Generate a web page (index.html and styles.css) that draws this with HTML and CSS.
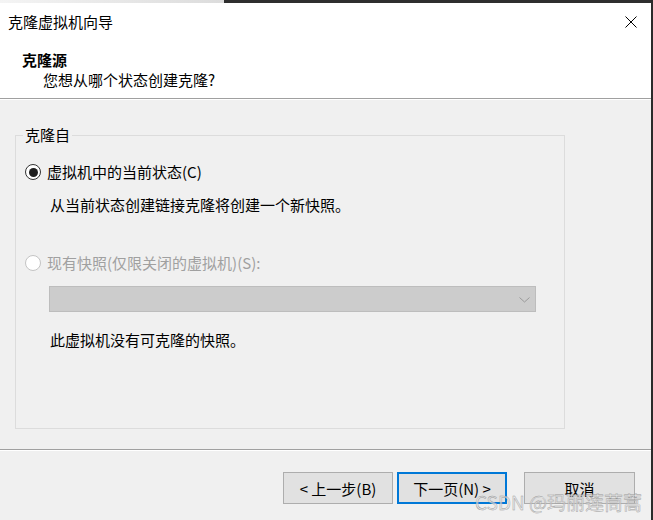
FILE: index.html
```html
<!DOCTYPE html>
<html lang="zh-CN">
<head>
    <meta charset="UTF-8">
    <meta name="viewport" content="width=device-width, initial-scale=1.0">
    <title>克隆虚拟机向导</title>
    <link rel="stylesheet" href="styles.css">
</head>
<body>

<div class="window">
    <div class="topbar">
        <div class="topbar-light"></div>
        <div class="topbar-dark"></div>
    </div>

    <div class="header">
        <div class="title-row">
            <span class="title">克隆虚拟机向导</span>
            <svg class="close" width="12" height="12" viewBox="0 0 12 12">
                <path d="M0.5 0.5 L11.5 11.5 M11.5 0.5 L0.5 11.5" stroke="#000" stroke-width="1" fill="none"/>
            </svg>
        </div>
        <div class="page-title">克隆源</div>
        <div class="page-sub">您想从哪个状态创建克隆?</div>
    </div>

    <div class="main">
        <fieldset class="group">
            <legend>克隆自</legend>

            <label class="radio-row">
                <span class="radio checked"></span>
                <span>虚拟机中的当前状态(C)</span>
            </label>
            <p class="hint first">从当前状态创建链接克隆将创建一个新快照。</p>

            <label class="radio-row disabled">
                <span class="radio"></span>
                <span>现有快照(仅限关闭的虚拟机)(S):</span>
            </label>
            <div class="combo">
                <svg width="11" height="6" viewBox="0 0 11 6">
                    <path d="M0.5 0.5 L5.5 5 L10.5 0.5" stroke="#9a9a9a" stroke-width="1" fill="none"/>
                </svg>
            </div>
            <p class="hint">此虚拟机没有可克隆的快照。</p>
        </fieldset>
    </div>

    <div class="footer">
        <div class="buttons">
            <button class="btn">&lt; 上一步(B)</button>
            <button class="btn default">下一页(N) &gt;</button>
            <button class="btn cancel">取消</button>
        </div>
        <div class="watermark">CSDN @玛丽莲茼蒿</div>
    </div>
</div>

</body>
</html>
```

FILE: styles.css
```css
body {
    margin: 0;
    width: 653px;
    height: 520px;
    overflow: hidden;
    background-color: #f0f0f0;
    font-family: "Noto Sans CJK SC", "Microsoft YaHei", sans-serif;
    font-size: 15px;
    line-height: 20px;
    color: #000;
}
.window {
    height: 520px;
    border-right: 2px solid #2b2b2b;
    display: flex;
    flex-direction: column;
}
.topbar {
    display: flex;
    height: 3px;
}
.topbar-light {
    width: 224px;
    background: linear-gradient(to right, #f4f4f4, #dcdcdc);
}
.topbar-dark {
    flex: 1;
    background-color: #2e2e2e;
}
.header {
    background: white;
    height: 95px;
    border-bottom: 1px solid #a0a0a0;
    box-shadow: 0 1px 0 #fff;
}
.title-row {
    display: flex;
    justify-content: space-between;
    align-items: center;
    padding: 9px 14px 0 8px;
}
.page-title {
    font-weight: bold;
    margin: 18px 0 0 22px;
}
.page-sub {
    margin-left: 43px;
}
.main {
    padding: 26px 0 0 15px;
}
.group {
    box-sizing: border-box;
    width: 550px;
    height: 304px;
    margin: 0;
    padding: 0 0 0 9px;
    border: 1px solid #dcdcdc;
}
.group legend {
    margin-left: -2px;
    padding: 0 2px;
}
.radio-row {
    display: flex;
    align-items: center;
    gap: 6px;
    margin-top: 17px;
}
.radio-row.disabled {
    color: #a0a0a0;
}
.radio {
    box-sizing: border-box;
    width: 16px;
    height: 16px;
    border-radius: 50%;
    background: white;
    border: 1px solid #c4c4c4;
    display: flex;
    justify-content: center;
    align-items: center;
}
.radio.checked {
    border: 1.5px solid #333;
}
.radio.checked::after {
    content: "";
    width: 9px;
    height: 9px;
    border-radius: 50%;
    background: #1f1f1f;
}
.hint {
    margin: 18px 0 0 25px;
}
.hint.first {
    margin-top: 13px;
}
.hint + .radio-row {
    margin-top: 38px;
}
.combo {
    box-sizing: border-box;
    width: 487px;
    height: 26px;
    margin: 13px 0 0 24px;
    background: #cccccc;
    border: 1px solid #bdbdbd;
    display: flex;
    justify-content: flex-end;
    align-items: center;
    padding: 1px 5px 0 0;
}
.footer {
    position: relative;
    margin-top: 20px;
    border-top: 1px solid #a0a0a0;
    box-shadow: inset 0 1px 0 #fff;
    padding-top: 22px;
}
.buttons {
    display: flex;
    justify-content: flex-end;
    padding-right: 16px;
}
.btn {
    box-sizing: border-box;
    width: 110px;
    height: 32px;
    font-family: inherit;
    font-size: 15px;
    background: #e1e1e1;
    border: 1px solid #adadad;
    color: #000;
    padding: 0;
}
.btn.default {
    margin-left: 4px;
    border: 2px solid #0078d7;
}
.btn.cancel {
    width: 111px;
    margin-left: 17px;
}
.watermark {
    position: absolute;
    left: 475px;
    top: 41px;
    font-size: 19px;
    line-height: 22px;
    color: rgba(230, 230, 230, 0.7);
    -webkit-text-stroke: 0.4px #999;
    white-space: nowrap;
}
```
